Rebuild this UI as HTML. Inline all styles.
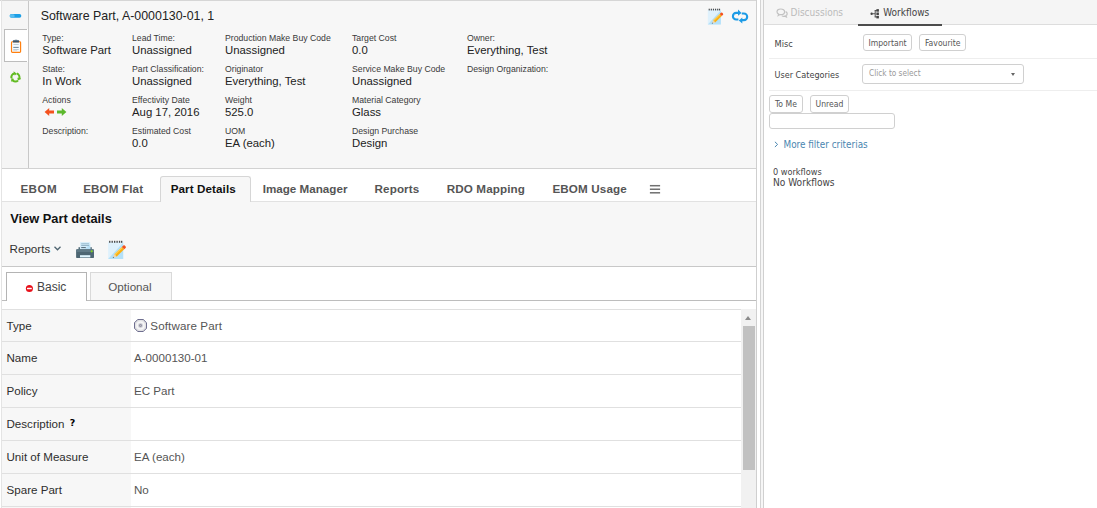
<!DOCTYPE html>
<html>
<head>
<meta charset="utf-8">
<title>Software Part, A-0000130-01, 1</title>
<style>
html,body{margin:0;padding:0;}
body{width:1097px;height:508px;overflow:hidden;background:#fff;position:relative;font-family:"Liberation Sans",Arial,sans-serif;color:#000;}
.abs{position:absolute;}
.t{position:absolute;white-space:nowrap;line-height:1;}
/* left pane */
#left{position:absolute;left:0;top:0;width:757px;height:508px;overflow:hidden;}
#hdr{position:absolute;left:2px;top:1px;width:754px;height:167px;background:#f7f7f7;}
.lbl{font-size:8.7px;color:#3a3a3a;}
.val{font-size:11.35px;color:#222;}
.tab{font-size:11.65px;font-weight:bold;color:#555;}
.row{position:absolute;left:2px;width:739px;height:32px;}
.row .k{position:absolute;left:0;top:0;width:128.6px;height:100%;background:#f7f7f7;}
.row .k span{position:absolute;left:4.5px;top:9px;font-size:11.6px;color:#2e2e2e;line-height:14px;white-space:nowrap;}
.row .v span{position:absolute;left:132px;top:9px;font-size:11.6px;color:#555;line-height:14px;white-space:nowrap;}
.rl{position:absolute;left:2px;width:739px;height:1px;background:#e0e0e0;}
/* right pane */
#right{position:absolute;left:764px;top:0;width:333px;height:508px;font-family:"DejaVu Sans Condensed","DejaVu Sans","Liberation Sans",sans-serif;}
.btn{position:absolute;box-sizing:border-box;border:1px solid #d0d0d0;border-radius:3px;background:#fff;font-size:8.55px;color:#555;text-align:center;white-space:nowrap;}
</style>
</head>
<body>
<div id="left">
  <div class="abs" style="left:0;top:0;width:757px;height:1px;background:#d6d6d6"></div>
  <div class="abs" style="left:1px;top:0;width:1px;height:508px;background:#e4e4e4"></div>
  <div class="abs" style="left:756px;top:0;width:1px;height:508px;background:#cfcfcf"></div>
  <div id="hdr"></div>
  <!-- side strip -->
  <div class="abs" style="left:2px;top:1px;width:26px;height:167px;background:#f5f5f5"></div>
  <div class="abs" style="left:28px;top:1px;width:1px;height:167px;background:#c8c8c8"></div>
  <div class="abs" style="left:4px;top:29px;width:24px;height:33px;background:#fff"></div>
  <div class="abs" style="left:4px;top:29px;width:23px;height:33px;background:#fff;border:1px solid #bdbdbd;border-right:none;box-sizing:border-box"></div>


  <!-- side icons -->
  <svg class="abs" style="left:9px;top:12px" width="14" height="8" viewBox="0 0 14 8"><rect x="0.7" y="2" width="11.6" height="3.8" rx="1.8" fill="#1b9fe6"/><rect x="0.7" y="2.3" width="5" height="3.2" rx="1.6" fill="#59bdf0"/></svg>
  <svg class="abs" style="left:10px;top:39px" width="12" height="15" viewBox="0 0 12 15"><rect x="1.5" y="2.7" width="9.1" height="10.6" rx="0.9" fill="#f4fafe" stroke="#ff7f0e" stroke-width="1.15"/><rect x="2.9" y="1.2" width="6.2" height="2.4" rx="0.5" fill="#3d566b"/><rect x="4.6" y="0.7" width="2.8" height="1" rx="0.4" fill="#5b7488"/><rect x="3.4" y="5.1" width="5.3" height="0.8" fill="#b4c3cd"/><rect x="3.3" y="7.9" width="5.4" height="1" fill="#6b8497"/><rect x="3.3" y="10.2" width="5.4" height="0.7" fill="#a9b8c2"/><rect x="3.3" y="11.1" width="3.8" height="0.6" fill="#c3cfd7"/></svg>
  <svg class="abs" style="left:8.7px;top:71.1px" width="12.8" height="12.8" viewBox="0 0 24 24"><g><path d="M14.6 4.86A7.6 7.6 0 0 1 19.14 14.6" fill="none" stroke="#62bb22" stroke-width="4"/><path d="M15.72 12.79L23.64 14.47L16.68 17.99z" fill="#62bb22"/></g><g transform="rotate(120 12 12)"><path d="M14.6 4.86A7.6 7.6 0 0 1 19.14 14.6" fill="none" stroke="#62bb22" stroke-width="4"/><path d="M15.72 12.79L23.64 14.47L16.68 17.99z" fill="#62bb22"/></g><g transform="rotate(240 12 12)"><path d="M14.6 4.86A7.6 7.6 0 0 1 19.14 14.6" fill="none" stroke="#62bb22" stroke-width="4"/><path d="M15.72 12.79L23.64 14.47L16.68 17.99z" fill="#62bb22"/></g></svg>
  <!-- action arrows -->
  <svg class="abs" style="left:44px;top:107px" width="11" height="10" viewBox="0 0 11 10"><path d="M0.6 5L5.2 0.9V3.4H10V6.6H5.2V9.1z" fill="#f4511e"/></svg>
  <svg class="abs" style="left:56px;top:107px" width="11" height="10" viewBox="0 0 11 10"><path d="M10.4 5L5.8 0.9V3.4H1V6.6H5.8V9.1z" fill="#5cb82c"/></svg>
  <!-- header right icons -->
  <svg class="abs" style="left:706px;top:8px" width="19" height="17.3" viewBox="0 0 22 20"><rect x="2.1" y="1.6" width="15.1" height="17.4" fill="#dff1fc"/><path d="M17.2 2.6V19H2.1z" fill="#b4e1f9"/><g fill="#4a4a4a"><rect x="3.1" y="0.8" width="1.3" height="2" /><rect x="5.55" y="0.8" width="1.3" height="2" /><rect x="8.0" y="0.8" width="1.3" height="2" /><rect x="10.45" y="0.8" width="1.3" height="2" /><rect x="12.9" y="0.8" width="1.3" height="2" /><rect x="15.0" y="0.8" width="1.3" height="2" /></g><g transform="translate(6.7 18.1) rotate(-44)"><path d="M3.8 -1.65H14.4V1.65H3.8z" fill="#fbb012"/><path d="M3.8 -1.65H14.4V-0.45H3.8z" fill="#fdd05a"/><path d="M14.4 -1.65H16.3Q17.4 -1.65 17.4 -0.6V0.6Q17.4 1.65 16.3 1.65H14.4z" fill="#f4511e"/><path d="M1.4 -0.6L3.8 -1.65V1.65L1.4 0.6z" fill="#f6d5a6"/><path d="M0 0L1.4 -0.6V0.6z" fill="#444"/></g></svg>
  <svg class="abs" style="left:731px;top:9px" width="18" height="15" viewBox="0 0 18 15"><g fill="none" stroke="#1c9be6" stroke-width="2.1"><path d="M7.4 10.5H5.2A3.3 3.3 0 0 1 5.2 3.9H7.4"/><path d="M10.8 4.5H12.9A3.3 3.3 0 0 1 12.9 11.1H11"/></g><path d="M7 0.6L10.5 3.9L7 6.7z" fill="#1c9be6"/><path d="M11.3 8.4L7.8 11.4L11.3 14.5z" fill="#1c9be6"/></svg>
  <div class="t" style="left:40.7px;top:10px;font-size:12.4px;color:#222">Software Part, A-0000130-01, 1</div>

  <div class="t lbl" style="left:42.3px;top:34px">Type:</div>
  <div class="t val" style="left:42.3px;top:45px">Software Part</div>
  <div class="t lbl" style="left:42.3px;top:65px">State:</div>
  <div class="t val" style="left:42.3px;top:76px">In Work</div>
  <div class="t lbl" style="left:42.3px;top:96px">Actions</div>
  <div class="t lbl" style="left:42.3px;top:127px">Description:</div>

  <div class="t lbl" style="left:132px;top:34px">Lead Time:</div>
  <div class="t val" style="left:132px;top:45px">Unassigned</div>
  <div class="t lbl" style="left:132px;top:65px">Part Classification:</div>
  <div class="t val" style="left:132px;top:76px">Unassigned</div>
  <div class="t lbl" style="left:132px;top:96px">Effectivity Date</div>
  <div class="t val" style="left:132px;top:107px">Aug 17, 2016</div>
  <div class="t lbl" style="left:132px;top:127px">Estimated Cost</div>
  <div class="t val" style="left:132px;top:138px">0.0</div>

  <div class="t lbl" style="left:225px;top:34px">Production Make Buy Code</div>
  <div class="t val" style="left:225px;top:45px">Unassigned</div>
  <div class="t lbl" style="left:225px;top:65px">Originator</div>
  <div class="t val" style="left:225px;top:76px">Everything, Test</div>
  <div class="t lbl" style="left:225px;top:96px">Weight</div>
  <div class="t val" style="left:225px;top:107px">525.0</div>
  <div class="t lbl" style="left:225px;top:127px">UOM</div>
  <div class="t val" style="left:225px;top:138px">EA (each)</div>

  <div class="t lbl" style="left:352px;top:34px">Target Cost</div>
  <div class="t val" style="left:352px;top:45px">0.0</div>
  <div class="t lbl" style="left:352px;top:65px">Service Make Buy Code</div>
  <div class="t val" style="left:352px;top:76px">Unassigned</div>
  <div class="t lbl" style="left:352px;top:96px">Material Category</div>
  <div class="t val" style="left:352px;top:107px">Glass</div>
  <div class="t lbl" style="left:352px;top:127px">Design Purchase</div>
  <div class="t val" style="left:352px;top:138px">Design</div>

  <div class="t lbl" style="left:467px;top:34px">Owner:</div>
  <div class="t val" style="left:467px;top:45px">Everything, Test</div>
  <div class="t lbl" style="left:467px;top:65px">Design Organization:</div>

  <!-- header bottom line -->
  <div class="abs" style="left:2px;top:168px;width:754px;height:1px;background:#d2d2d2"></div>

  <!-- tab bar -->
  <div class="abs" style="left:2px;top:201px;width:754px;height:1px;background:#e2e2e2"></div>
  <div class="abs" style="left:160px;top:176px;width:91px;height:26px;box-sizing:border-box;border:1px solid #d6d6d6;border-bottom:none;background:#f7f7f7;border-radius:3px 3px 0 0"></div>
  <div class="t tab" style="left:20.4px;top:183px;letter-spacing:0.45px">EBOM</div>
  <div class="t tab" style="left:83.2px;top:183px;letter-spacing:0.13px">EBOM Flat</div>
  <div class="t tab" style="left:170.7px;top:183px;color:#111;letter-spacing:0.09px">Part Details</div>
  <div class="t tab" style="left:262.7px;top:183px">Image Manager</div>
  <div class="t tab" style="left:374.5px;top:183px;letter-spacing:0.13px">Reports</div>
  <div class="t tab" style="left:446.7px;top:183px;letter-spacing:0.13px">RDO Mapping</div>
  <div class="t tab" style="left:552.4px;top:183px;letter-spacing:0.14px">EBOM Usage</div>


  <!-- hamburger -->
  <svg class="abs" style="left:649px;top:183px" width="12" height="12" viewBox="0 0 12 12"><g fill="#707070"><rect x="0.9" y="1.95" width="10.2" height="1.5"/><rect x="0.9" y="5.5" width="10.2" height="1.5"/><rect x="0.9" y="9.05" width="10.2" height="1.5"/></g></svg>
  <!-- section -->
  <div class="abs" style="left:2px;top:202px;width:754px;height:64px;background:#f7f7f7"></div>
  <div class="t" style="left:10.3px;top:213px;font-size:12.8px;font-weight:bold;color:#111">View Part details</div>
  <div class="t" style="left:9.5px;top:243px;font-size:11.65px;color:#333">Reports</div>

  <svg class="abs" style="left:53px;top:245px" width="9" height="7" viewBox="0 0 9 7"><path d="M1.5 1.8L4.5 4.8L7.5 1.8" fill="none" stroke="#4f6470" stroke-width="1.3"/></svg>
  <!-- printer -->
  <svg class="abs" style="left:75px;top:241px" width="20" height="18" viewBox="0 0 20 18"><rect x="3.5" y="6.2" width="1.6" height="3" fill="#546e7a"/><rect x="15.2" y="6.2" width="1.6" height="3" fill="#546e7a"/><rect x="5.1" y="1.2" width="10.1" height="8.4" fill="#d2ecfb"/><path d="M15.2 3V9.6H8z" fill="#b9e1f8"/><rect x="6.2" y="2.4" width="7.8" height="0.9" fill="#8eb0c4"/><rect x="6.2" y="4" width="7.8" height="0.9" fill="#8eb0c4"/><rect x="6.2" y="6.1" width="4.6" height="1" fill="#4f6775"/><rect x="1.1" y="8.3" width="17.9" height="8.8" rx="1.2" fill="#4d6673"/><rect x="1.1" y="8.3" width="17.9" height="2.8" rx="1.2" fill="#5f7986"/><rect x="5" y="14.2" width="10.3" height="2.2" fill="#dff5ff"/><circle cx="16.7" cy="10.3" r="1.1" fill="#7ed321"/></svg>
  <!-- edit -->
  <svg class="abs" style="left:106px;top:240px" width="22" height="20" viewBox="0 0 22 20"><rect x="2.1" y="1.6" width="15.1" height="17.4" fill="#dff1fc"/><path d="M17.2 2.6V19H2.1z" fill="#b4e1f9"/><g fill="#4a4a4a"><rect x="3.1" y="0.8" width="1.3" height="2" /><rect x="5.55" y="0.8" width="1.3" height="2" /><rect x="8.0" y="0.8" width="1.3" height="2" /><rect x="10.45" y="0.8" width="1.3" height="2" /><rect x="12.9" y="0.8" width="1.3" height="2" /><rect x="15.0" y="0.8" width="1.3" height="2" /></g><g transform="translate(6.7 18.1) rotate(-44)"><path d="M3.8 -1.65H14.4V1.65H3.8z" fill="#fbb012"/><path d="M3.8 -1.65H14.4V-0.45H3.8z" fill="#fdd05a"/><path d="M14.4 -1.65H16.3Q17.4 -1.65 17.4 -0.6V0.6Q17.4 1.65 16.3 1.65H14.4z" fill="#f4511e"/><path d="M1.4 -0.6L3.8 -1.65V1.65L1.4 0.6z" fill="#f6d5a6"/><path d="M0 0L1.4 -0.6V0.6z" fill="#444"/></g></svg>
  <div class="abs" style="left:2px;top:266px;width:754px;height:1px;background:#c8c8c8"></div>

  <!-- basic/optional tabs -->
  <div class="abs" style="left:2px;top:300px;width:754px;height:1px;background:#bdbdbd"></div>
  <div class="abs" style="left:6px;top:272px;width:81px;height:29px;box-sizing:border-box;border:1px solid #b4b4b4;border-bottom:none;background:#fff"></div>
  <div class="abs" style="left:90px;top:272px;width:82px;height:28px;box-sizing:border-box;border:1px solid #d9d9d9;border-bottom:none;background:#f7f7f7"></div>

  <svg class="abs" style="left:25px;top:284px" width="9" height="9" viewBox="0 0 9 9"><circle cx="4.4" cy="4.5" r="3.55" fill="#e8101a"/><rect x="2" y="3.7" width="4.8" height="1.5" rx="0.5" fill="#fff"/></svg>
  <div class="t" style="left:37px;top:280.5px;font-size:12px;color:#444">Basic</div>
  <div class="t" style="left:108.3px;top:281px;font-size:11.65px;color:#555">Optional</div>

  <div class="rl" style="top:309px"></div>

  <!-- table -->
  <div class="row" style="top:310px"><div class="k"><span>Type</span></div><div class="v"><span style="left:148.3px;letter-spacing:0.12px">Software Part</span></div></div>
  <div class="row" style="top:342px"><div class="k"><span>Name</span></div><div class="v"><span>A-0000130-01</span></div></div>
  <div class="row" style="top:375px"><div class="k"><span>Policy</span></div><div class="v"><span>EC Part</span></div></div>
  <div class="row" style="top:408px"><div class="k"><span>Description</span></div><div class="v"><span></span></div></div>
  <div class="row" style="top:441px"><div class="k"><span>Unit of Measure</span></div><div class="v"><span>EA (each)</span></div></div>
  <div class="row" style="top:474px"><div class="k"><span>Spare Part</span></div><div class="v"><span>No</span></div></div>
  <div class="row" style="top:507px"><div class="k"></div></div>

  <svg class="abs" style="left:133px;top:318px" width="15" height="15" viewBox="0 0 15 15"><defs><radialGradient id="hx" cx="0.5" cy="0.5" r="0.5"><stop offset="0" stop-color="#b8b8c4"/><stop offset="0.16" stop-color="#9696a6"/><stop offset="0.34" stop-color="#d6d6dc"/><stop offset="0.55" stop-color="#fbfbfb"/><stop offset="0.82" stop-color="#e4e4e6"/><stop offset="1" stop-color="#d4d4d8"/></radialGradient></defs><path d="M4.7 1.5H10.3L13.5 4.7V10.3L10.3 13.5H4.7L1.5 10.3V4.7z" fill="url(#hx)" stroke="#4f4f78" stroke-width="0.8"/></svg>
  <div class="t" style="left:69.8px;top:418px;font-size:9.5px;font-weight:bold;color:#000;font-family:'DejaVu Sans','Liberation Sans',sans-serif">?</div>
  <div class="rl" style="top:341px"></div>
  <div class="rl" style="top:374px"></div>
  <div class="rl" style="top:407px"></div>
  <div class="rl" style="top:440px"></div>
  <div class="rl" style="top:473px"></div>
  <div class="rl" style="top:506px"></div>

  <!-- scrollbar -->
  <div class="abs" style="left:741px;top:309px;width:15px;height:199px;background:#f1f1f1"></div>
  <div class="abs" style="left:743px;top:326px;width:12px;height:144px;background:#c1c1c1"></div>
  <div class="abs" style="left:745px;top:316px;width:0;height:0;border-left:3.5px solid transparent;border-right:3.5px solid transparent;border-bottom:4px solid #8a8a8a"></div>
</div>

<!-- splitter -->
<div class="abs" style="left:760px;top:0;width:1px;height:508px;background:#d4d4d4"></div>
<div class="abs" style="left:761px;top:0;width:2px;height:508px;background:#f6f6f6"></div>
<div class="abs" style="left:763px;top:0;width:1px;height:508px;background:#d0d0d0"></div>

<div id="right">
  <div class="abs" style="left:0;top:0;width:333px;height:24px;background:#f5f5f5"></div>
  <div class="abs" style="left:0;top:24px;width:333px;height:1px;background:#ddd"></div>
  <div class="abs" style="left:94px;top:24px;width:84px;height:2px;background:#4d4d4d"></div>

  <svg class="abs" style="left:12px;top:8px" width="12" height="10" viewBox="0 0 12 10"><g fill="none" stroke="#c2c2c2" stroke-width="1.2"><path d="M4.8 1C2.6 1 1 2.2 1 3.8C1 4.8 1.6 5.6 2.6 6.1L2.2 7.6L4 6.6C4.3 6.6 4.5 6.7 4.8 6.7C7 6.7 8.6 5.4 8.6 3.8S7 1 4.8 1z"/><path d="M9.6 3.6C10.6 4 11.2 4.8 11.2 5.7C11.2 6.5 10.7 7.2 10 7.6L10.4 9L8.8 8.2C8 8.4 6.6 8.3 5.8 7.6"/></g></svg>
  <svg class="abs" style="left:105.5px;top:7.7px" width="10" height="11" viewBox="0 0 11 12"><g fill="#444"><circle cx="1.8" cy="6.3" r="1.3"/><rect x="2.5" y="5.8" width="3.2" height="1"/><rect x="5.2" y="2.4" width="1" height="7.8"/><rect x="5.2" y="2.4" width="2.4" height="0.9"/><rect x="5.2" y="9.3" width="2.4" height="0.9"/><rect x="7" y="1.2" width="2.8" height="2.8"/><rect x="7" y="4.9" width="2.8" height="2.8"/><rect x="7" y="8.6" width="2.8" height="2.8"/></g></svg>
  <div class="t" style="left:26.5px;top:8px;font-size:10px;color:#bbb">Discussions</div>
  <div class="t" style="left:119.3px;top:8px;font-size:10px;color:#444">Workflows</div>

  <div class="t" style="left:10.6px;top:39px;font-size:9.2px;color:#444">Misc</div>
  <div class="btn" style="left:98.5px;top:33.5px;width:49px;height:17px;line-height:16px;padding-left:1px"><span>Important</span></div>
  <div class="btn" style="left:155px;top:33.5px;width:46.5px;height:17px;line-height:16px;padding-left:1px"><span>Favourite</span></div>
  <div class="abs" style="left:5px;top:58px;width:328px;height:1px;background:#eee"></div>

  <div class="t" style="left:10.6px;top:71px;font-size:9px;color:#444">User Categories</div>
  <div class="btn" style="left:98px;top:64px;width:162px;height:20px;"></div>
  <div class="t" style="left:105px;top:69px;font-size:8.2px;color:#999">Click to select</div>
  <div class="abs" style="left:246.5px;top:72.5px;width:0;height:0;border-left:2.5px solid transparent;border-right:2.5px solid transparent;border-top:3.5px solid #666"></div>
  <div class="abs" style="left:5px;top:90px;width:328px;height:1px;background:#eee"></div>

  <div class="btn" style="left:5px;top:95px;width:34px;height:18px;line-height:16px"><span>To Me</span></div>
  <div class="btn" style="left:46px;top:95px;width:39px;height:18px;line-height:16px"><span>Unread</span></div>
  <div class="btn" style="left:5px;top:113px;width:126px;height:16px;"></div>

  <div class="t" style="left:10px;top:140px;font-size:9.85px;color:#4a86b0"><svg style="position:absolute;left:0;top:0.8px" width="5" height="7" viewBox="0 0 5 7"><path d="M0.9 0.8L3.6 3.4L0.9 6" fill="none" stroke="#4a86b0" stroke-width="1"/></svg><span style="position:absolute;left:9.5px;top:0">More filter criterias</span></div>
  <div class="t" style="left:9px;top:167.5px;font-size:9.1px;color:#444">0 workflows</div>
  <div class="t" style="left:9px;top:178px;font-size:10.1px;color:#444">No Workflows</div>
</div>
</body>
</html>
